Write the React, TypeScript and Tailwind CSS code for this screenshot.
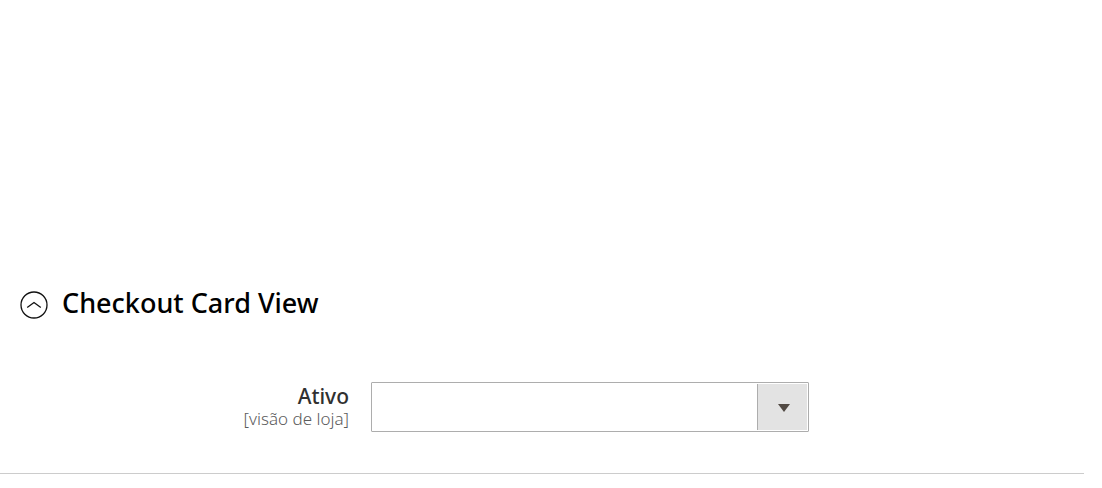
export default function App() {
  return (
    <main className="min-h-screen bg-white pt-72 pr-[18px] font-['Noto_Sans','Open_Sans',sans-serif] text-[#303030]">
      <section className="border-b border-[#cccccc] pb-[41px]">
        <h2>
          <button type="button" aria-expanded="true" aria-controls="card-view" className="ml-5 flex items-start gap-[14px] text-[27px] leading-[29px] font-medium text-black">
            <svg width="28" height="34" viewBox="0 0 28 34" fill="none" stroke="#111" aria-hidden="true">
              <circle cx="14" cy="17" r="13" strokeWidth="1.3" />
              <path d="M7.2 19.5L14 14.5L20.8 19.5" strokeWidth="1.3" />
            </svg>
            Checkout Card View
          </button>
        </h2>
        <div id="card-view" className="mt-[60px] flex">
          <label htmlFor="active" className="w-[349px] shrink-0 pt-0.5 text-right">
            <span className="block text-[21px] leading-6 font-medium">Ativo</span>
            <span className="block text-[17px] leading-[22px] font-light text-[#5c5c5c]">[visão de loja]</span>
          </label>
          <div className="ml-[22px] grid w-[438px]">
            <select id="active" defaultValue="" className="col-start-1 row-start-1 h-[50px] w-full appearance-none rounded-[1px] border border-[#adadad] bg-white px-4 text-xl">
              <option value=""></option>
              <option value="1">Sim</option>
              <option value="0">Não</option>
            </select>
            <span className="pointer-events-none col-start-1 row-start-1 m-0.5 flex w-[50px] items-center justify-center justify-self-end border-l border-[#adadad] bg-[#e3e3e3] pt-0.5 pl-0.5">
              <svg width="12" height="8" viewBox="0 0 12 8" aria-hidden="true"><path d="M0 0H12L6 8Z" fill="#514943" /></svg>
            </span>
          </div>
        </div>
      </section>
    </main>
  );
}
